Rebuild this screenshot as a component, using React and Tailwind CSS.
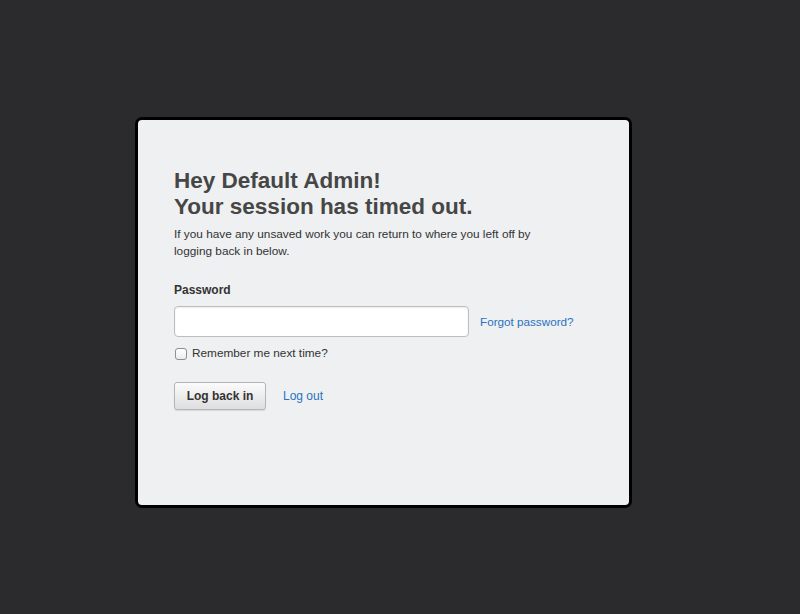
export default function App() {
  return (
    <div className="min-h-[614px] w-full bg-[#2b2b2d] pt-[117px] pl-[135px]" style={{ fontFamily: '"Liberation Sans", Arial, sans-serif' }}>
      <div className="w-[497px] h-[391px] rounded-[7px] border-[3px] border-black bg-[#eef0f1] pl-[36px] pt-[48px]">
        <h1 className="text-[22.5px] leading-[26px] font-bold text-[#464646]">
          Hey Default Admin!<br />Your session has timed out.
        </h1>
        <p className="mt-[6px] w-[385px] text-[11.8px] leading-[17px] text-[#333]">
          If you have any unsaved work you can return to where you left off by logging back in below.
        </p>

        <label className="mt-[22px] block text-[12px] leading-[16px] font-bold text-[#333]">Password</label>
        <div className="mt-[8px] flex items-center">
          <input type="password" className="h-[31px] w-[295px] rounded-[4px] border border-[#bdbdbd] bg-white shadow-[inset_0_1px_2px_rgba(0,0,0,0.08)] outline-none" />
          <a href="#" className="ml-[11px] text-[11.7px] text-[#2a72c0]">Forgot password?</a>
        </div>

        <label className="mt-[8px] flex items-center gap-[5px] text-[11.8px] text-[#333]">
          <span className="ml-px h-[12px] w-[12px] rounded-[3px] border border-[#8f8f8f] bg-gradient-to-b from-white to-[#ececec]"></span>
          Remember me next time?
        </label>

        <div className="mt-[19px] flex items-center">
          <button className="h-[28px] w-[92px] rounded-[3px] border border-[#b5b5b5] bg-gradient-to-b from-[#fbfbfb] to-[#dedede] text-[12px] font-bold text-[#333] shadow-[0_1px_1px_rgba(0,0,0,0.1)]">
            Log back in
          </button>
          <a href="#" className="ml-[17px] text-[12px] text-[#2a72c0]">Log out</a>
        </div>
      </div>
    </div>
  )
}
